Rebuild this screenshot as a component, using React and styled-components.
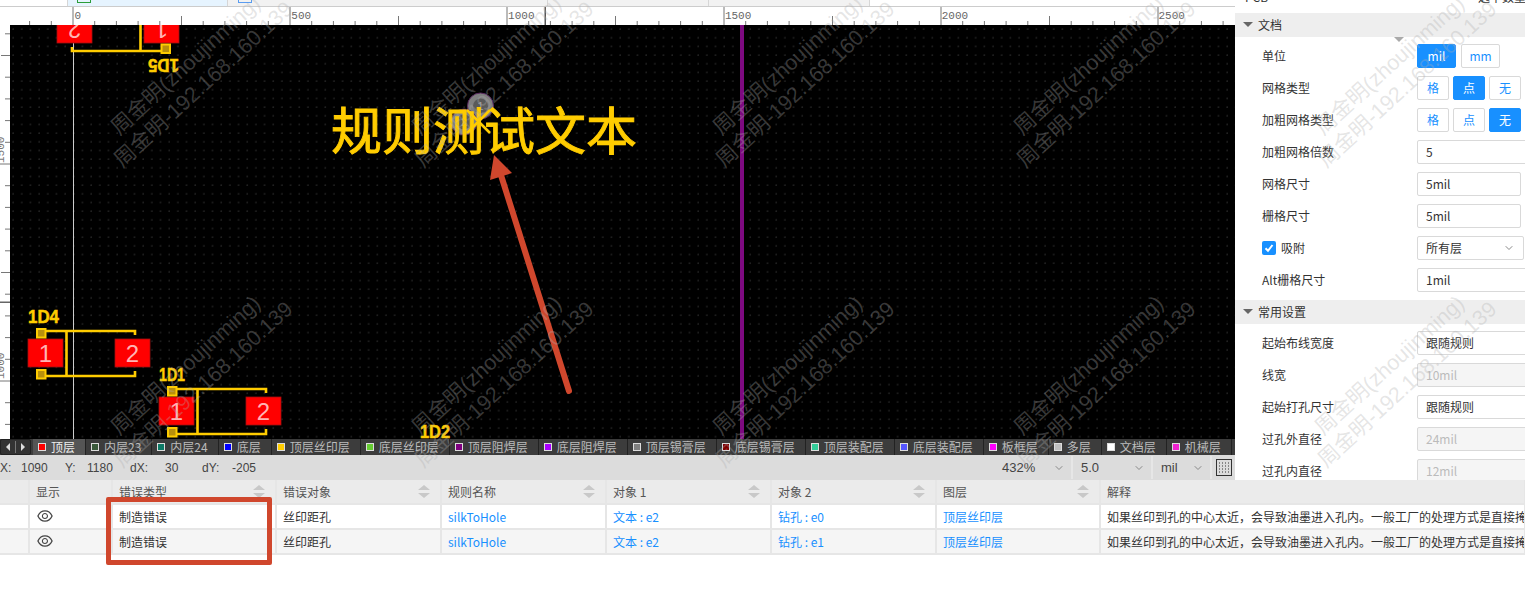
import React from "react"
import styled, { createGlobalStyle } from "styled-components"
import { ChevronDown } from "lucide-react"
import { AiOutlineEye } from "react-icons/ai"

const GlobalStyle = createGlobalStyle`
  html, body {
    margin: 0;
    padding: 0;
    overflow: hidden;
    background: #fff;
  }
  * {
    box-sizing: border-box;
  }
`

const BLUE = "#1890ff"
const SILK = "#ffcc00"
const MARK = "#d0472d"
const UI_FONT = `"Noto Sans CJK SC", "Liberation Sans", sans-serif`

const Page = styled.div`
  position: relative;
  width: 1525px;
  height: 590px;
  overflow: hidden;
  display: flex;
  flex-direction: column;
  font-family: ${UI_FONT};
  font-size: 12px;
  color: #333;
`

const Workspace = styled.div`
  display: flex;
  height: 480px;
  flex: none;
`

const Editor = styled.div`
  width: 1235px;
  flex: none;
  display: flex;
  flex-direction: column;
`

const TabStrip = styled.div`
  display: flex;
  height: 7px;
  flex: none;
  border-bottom: 1px solid #ccc;
  overflow: hidden;
`

const StripTab = styled.div`
  width: ${(p) => p.$w}px;
  flex: none;
  background: ${(p) => p.$bg};
  border-right: 1px solid #d6d6d6;
  display: flex;
  padding-left: ${(p) => p.$pad || 0}px;
`

const StripIcon = styled.div`
  width: 14px;
  height: 3px;
  border: 1px solid ${(p) => p.$c};
  border-top: 0;
`

const RulerRow = styled.div`
  display: flex;
  height: 18px;
  flex: none;
  background: #fff;
`

const RulerCorner = styled.div`
  width: 10px;
  flex: none;
`

const CanvasRow = styled.div`
  display: flex;
  height: 414px;
  flex: none;
`

const Canvas = styled.div`
  flex: 1;
  background-color: #000;
  background-image: radial-gradient(circle at 1px 1px, #3c3c3c 0.5px, transparent 0.8px);
  background-size: 8.68px 8.68px;
  background-position: 2px 3px;
`

const FullSvg = styled.svg`
  display: block;
  width: 100%;
  height: 100%;
`

const LayerBar = styled.div`
  display: flex;
  height: 16px;
  flex: none;
  background: #3c3c3c;
  overflow: hidden;
`

const LayerNav = styled.div`
  width: 31px;
  flex: none;
  display: flex;
  align-items: center;
  justify-content: space-around;
  border: 1px solid #222;
  border-radius: 2px;
  background: #333;
  margin-right: 2px;
  padding: 0 3px;
`

const NavArrow = styled.span`
  width: 0;
  height: 0;
  border-top: 4px solid transparent;
  border-bottom: 4px solid transparent;
  border-left: ${(p) => (p.$right ? "4px solid #ddd" : "0")};
  border-right: ${(p) => (p.$right ? "0" : "4px solid #ddd")};
`

const NavDivider = styled.span`
  width: 1px;
  height: 12px;
  background: #777;
`

const LayerTab = styled.div`
  display: flex;
  align-items: center;
  flex: none;
  padding: 0 10px 0 5px;
  gap: 5px;
  border-right: 1px solid #222;
  background: ${(p) => (p.$active ? "#555" : "transparent")};
  color: ${(p) => (p.$active ? "#eee" : "#bbb")};
  line-height: 16px;
`

const Swatch = styled.span`
  width: 8px;
  height: 8px;
  flex: none;
  background: ${(p) => p.$c};
  border: 1px solid #ddd;
`

const StatusBar = styled.div`
  display: flex;
  align-items: center;
  height: 25px;
  flex: none;
  background: #dcdcdc;
  font-family: "Liberation Sans", sans-serif;
  color: #444;
`

const StatusItem = styled.span`
  width: ${(p) => p.$w}px;
  flex: none;
  white-space: nowrap;
`

const StatusFill = styled.div`
  flex: 1;
`

const StatusSelect = styled.div`
  display: flex;
  align-items: center;
  justify-content: space-between;
  width: ${(p) => p.$w}px;
  height: 23px;
  flex: none;
  padding: 0 6px 0 8px;
  border-right: 2px solid #e6e6e6;
  font-size: 13px;
`

const GridButton = styled.div`
  width: 23px;
  display: flex;
  justify-content: center;
  flex: none;
`

const Panel = styled.aside`
  position: relative;
  flex: 1;
  background: #fff;
  overflow: hidden;
`

const PanelHead = styled.div`
  display: flex;
  justify-content: space-between;
  height: 24px;
  margin-top: -11px;
  padding: 0 0 0 10px;
  line-height: 16px;
  white-space: nowrap;
`

const HeadCount = styled.span`
  width: 47px;
`

const SectionTitle = styled.div`
  display: flex;
  align-items: center;
  gap: 5px;
  height: 24px;
  margin-top: ${(p) => p.$mt || 0}px;
  padding: 0 0 2px 8px;
  background: #eee;
`

const Caret = styled.span`
  width: 0;
  height: 0;
  border-left: 5px solid transparent;
  border-right: 5px solid transparent;
  border-top: 5px solid #666;
`

const CollapseHandle = styled(Caret)`
  position: absolute;
  top: 37px;
  left: 159px;
  border-top-color: #aaa;
`

const SectionBody = styled.div`
  display: flex;
  flex-direction: column;
  gap: 8px;
  padding-top: 7px;
`

const Field = styled.div`
  display: grid;
  grid-template-columns: 155px auto;
  align-items: center;
  height: 24px;
  padding-left: 27px;
  padding-bottom: 1px;
  white-space: nowrap;
`

const LabelWrap = styled.div`
  display: flex;
  align-items: center;
  gap: 5px;
`

const CheckBox = styled.span`
  display: flex;
  align-items: center;
  justify-content: center;
  width: 14px;
  height: 14px;
  background: ${BLUE};
  border-radius: 2px;
`

const ButtonGroup = styled.div`
  display: flex;
  gap: ${(p) => p.$gap}px;
  margin-bottom: -1px;
`

const ToggleButton = styled.div`
  width: ${(p) => p.$w}px;
  height: 24px;
  padding-bottom: 1px;
  display: flex;
  align-items: center;
  justify-content: center;
  border: 1px solid ${(p) => (p.$on ? BLUE : "#d9d9d9")};
  border-radius: 2px;
  background: ${(p) => (p.$on ? BLUE : "#fff")};
  color: ${(p) => (p.$on ? "#fff" : BLUE)};
`

const InputBox = styled.div`
  display: flex;
  align-items: center;
  justify-content: space-between;
  width: ${(p) => p.$w || 130}px;
  height: 24px;
  margin-bottom: -1px;
  padding: 0 8px 1px;
  border: 1px solid #d9d9d9;
  border-radius: 2px;
  background: ${(p) => (p.$off ? "#f5f5f5" : "#fff")};
  color: ${(p) => (p.$off ? "#bbb" : "#333")};
`

const Table = styled.div`
  display: flex;
  flex-direction: column;
  flex: none;
`

const TableRow = styled.div`
  display: grid;
  grid-template-columns: 30px 83px 164px 165px 165px 165px 165px 164px 425px;
  height: 25px;
  background: ${(p) => p.$bg};
  color: ${(p) => (p.$head ? "#555" : "#333")};
`

const Cell = styled.div`
  position: relative;
  display: flex;
  align-items: center;
  padding: 0 0 1px 6px;
  border-right: 2px solid #e6e6e6;
  border-bottom: 2px solid #e6e6e6;
  white-space: nowrap;
  overflow: hidden;
  color: ${(p) => (p.$link ? BLUE : "inherit")};
`

const SortMark = styled.span`
  position: absolute;
  right: 10px;
  top: 5px;
  display: flex;
  flex-direction: column;
  gap: 3px;
`

const SortUp = styled.span`
  width: 0;
  height: 0;
  border-left: 6px solid transparent;
  border-right: 6px solid transparent;
  border-bottom: 5px solid #c8c8c8;
`

const SortDown = styled(SortUp)`
  border-bottom: 0;
  border-top: 5px solid #c8c8c8;
`

const Callout = styled.div`
  position: absolute;
  left: 106px;
  top: 497px;
  width: 166px;
  height: 68px;
  border: 5px solid ${MARK};
  border-radius: 2px;
  pointer-events: none;
`

const Watermarks = styled.div`
  position: absolute;
  left: 44px;
  top: -75px;
  display: grid;
  grid-template-columns: repeat(5, 301px);
  grid-auto-rows: 300px;
  pointer-events: none;
`

const Watermark = styled.div`
  display: flex;
  flex-direction: column;
  align-items: center;
  justify-content: center;
  justify-self: center;
  align-self: center;
  transform: rotate(-42.5deg);
  font-family: "Liberation Sans", "Noto Sans CJK SC", sans-serif;
  font-size: 21.5px;
  line-height: 26px;
  white-space: nowrap;
  color: rgba(175, 175, 175, 0.32);
`

const COLUMNS = [
  ["显示"],
  ["错误类型", true],
  ["错误对象", true],
  ["规则名称", true],
  ["对象 1", true],
  ["对象 2", true],
  ["图层", true],
  ["解释"],
]

const EXPLAIN = "如果丝印到孔的中心太近，会导致油墨进入孔内。一般工厂的处理方式是直接掩盖"

const ERRORS = [
  { id: "钻孔 : e0", bg: "#fff" },
  { id: "钻孔 : e1", bg: "#f5f5f5" },
]

const LAYERS = [
  ["顶层", "#f00", true],
  ["内层23", "#3b5a3b"],
  ["内层24", "#0d7a66"],
  ["底层", "#00f"],
  ["顶层丝印层", SILK],
  ["底层丝印层", "#66cc33"],
  ["顶层阻焊层", "#800080"],
  ["底层阻焊层", "#aa00ff"],
  ["顶层锡膏层", "#808080"],
  ["底层锡膏层", "#800000"],
  ["顶层装配层", "#33cc99"],
  ["底层装配层", "#5555ff"],
  ["板框层", "#ff00ff"],
  ["多层", "#c0c0c0"],
  ["文档层", "#fff"],
  ["机械层", "#f022d0"],
]

const TICK = 21.7

const TopRuler = () => {
  const ticks = []
  for (let k = -2; k <= 53; k++) {
    const x = 73 + k * TICK
    const len = k % 10 === 0 ? 18 : k % 5 === 0 ? 9 : 4
    ticks.push(<line key={k} x1={x} x2={x} y1={25 - len} y2={25} stroke="#777" />)
  }
  return (
    <FullSvg viewBox="10 7 1225 18">
      {ticks}
      {[0, 500, 1000, 1500, 2000, 2500].map((v, i) => (
        <text key={v} x={74.5 + i * 216.8} y={19} fontFamily="Liberation Mono" fontSize="11" fill="#666">
          {v}
        </text>
      ))}
      <rect x="544.5" y="7" width="1.5" height="18" fill="#555" />
    </FullSvg>
  )
}

const SideRuler = () => {
  const ticks = []
  for (let k = -6; k <= 13; k++) {
    const y = 164 + k * TICK
    const len = k % 10 === 0 ? 10 : k % 5 === 0 ? 9 : 5
    ticks.push(<line key={k} x1={10 - len} x2={10} y1={y} y2={y} stroke="#777" />)
  }
  return (
    <FullSvg viewBox="0 25 10 414">
      {ticks}
      <text transform="translate(4 163) rotate(-90)" fontFamily="Liberation Mono" fontSize="11" fill="#777">
        1500
      </text>
      <text transform="translate(4 379) rotate(-90)" fontFamily="Liberation Mono" fontSize="11" fill="#777">
        1000
      </text>
      <rect x="0" y="301.5" width="10" height="1.5" fill="#666" />
    </FullSvg>
  )
}

const Designator = ({ x, y, w, children }) => (
  <text
    x={x}
    y={y}
    fontFamily="Liberation Sans"
    fontWeight="700"
    fontSize="18"
    fill={SILK}
    stroke={SILK}
    strokeWidth="0.5"
    textLength={w}
    lengthAdjust="spacingAndGlyphs"
  >
    {children}
  </text>
)

const Pad = ({ x, n }) => (
  <g>
    <rect x={x} y="339" width="35" height="28" fill="#f00" stroke="#a01010" strokeWidth="0.8" />
    <text x={x + 17.5} y="361.5" textAnchor="middle" fontFamily="Liberation Sans" fontSize="24" fill="#ffb4b4">
      {n}
    </text>
  </g>
)

const Drill = ({ y }) => <rect x="37" y={y} width="8.5" height="8.5" fill="#b8900c" stroke={SILK} strokeWidth="2" />

const Hole = ({ x, y, n }) => (
  <g>
    <circle cx={x} cy={y} r="13" fill="#808080" stroke="#5b2a60" />
    <circle cx={x} cy={y} r="7.5" fill="#5a5a5a" />
    <text x={x} y={y + 4} textAnchor="middle" fontFamily="Liberation Sans" fontSize="11" fill="#a0a0a0">
      {n}
    </text>
  </g>
)

// 1D4 is the base footprint, the others are moved copies of it
const Diode = ({ transform, name, w }) => (
  <g transform={transform}>
    <Designator x={28} y={323} w={w}>
      {name}
    </Designator>
    <Pad x={28} n="1" />
    <Pad x={115} n="2" />
    <path d="M41 331H135V335M41 376H135V371M66.5 331V376" fill="none" stroke={SILK} strokeWidth="2.6" />
    <Drill y={329} />
    <Drill y={370} />
  </g>
)

const Board = () => (
  <FullSvg viewBox="10 25 1225 414">
    <rect x="73" y="25" width="1" height="414" fill="#ccc" />
    <rect x="740" y="25" width="4" height="414" fill="#7d0a80" />
    <Diode transform="rotate(180 103.5 191)" name="1D5" w={31} />
    <Diode name="1D4" w={31} />
    <Diode transform="translate(131 58)" name="1D1" w={26} />
    <Designator x={420} y={438} w={30}>
      1D2
    </Designator>
    <Hole x={480.5} y={106} n="1" />
    <Hole x={464} y={122} n="2" />
    <text
      x="331"
      y="150"
      fontFamily="Noto Sans CJK SC"
      fontSize="51"
      fill={SILK}
      stroke={SILK}
      strokeWidth="0.9"
      textLength="306"
      lengthAdjust="spacingAndGlyphs"
    >
      规则测试文本
    </text>
    <path d="M467 133L490 110M467 110L490 133" stroke={SILK} strokeWidth="2.6" />
    <path d="M569 391L500 172" stroke={MARK} strokeWidth="6" strokeLinecap="round" />
    <path d="M494 155L490 180L512 173Z" fill={MARK} />
  </FullSvg>
)

const DotGrid = () => (
  <svg width="16" height="17" viewBox="0 0 16 17">
    <rect x="0.5" y="0.5" width="15" height="16" fill="none" stroke="#333" />
    {[4, 7, 10, 13].map((y) =>
      [3.5, 6.5, 9.5, 12.5].map((x) => <rect key={x + "-" + y} x={x - 0.5} y={y - 0.5} width="1" height="1" fill="#333" />)
    )}
  </svg>
)

const Toggles = ({ options, on, w, gap }) => (
  <ButtonGroup $gap={gap}>
    {options.map((o) => (
      <ToggleButton key={o} $w={w} $on={o === on}>
        {o}
      </ToggleButton>
    ))}
  </ButtonGroup>
)

const GRID_KINDS = ["格", "点", "无"]

const App = () => {
  return (
    <Page>
      <GlobalStyle />
      <Workspace>
        <Editor>
          <TabStrip>
            <StripTab $w={68} $bg="#fff" />
            <StripTab $w={160} $bg="#e6f4ff" $pad={9}>
              <StripIcon $c="#2a9d3a" />
            </StripTab>
            <StripTab $w={320} $bg="#f2f2f2" $pad={10}>
              <StripIcon $c="#5a9cf0" />
            </StripTab>
            <StripTab $w={161} $bg="#f2f2f2" />
            <StripTab $w={161} $bg="#f2f2f2" />
          </TabStrip>
          <RulerRow>
            <RulerCorner />
            <TopRuler />
          </RulerRow>
          <CanvasRow>
            <RulerCorner>
              <SideRuler />
            </RulerCorner>
            <Canvas>
              <Board />
            </Canvas>
          </CanvasRow>
          <LayerBar>
            <LayerNav>
              <NavArrow />
              <NavDivider />
              <NavArrow $right />
            </LayerNav>
            {LAYERS.map(([name, c, active]) => (
              <LayerTab key={name} $active={active}>
                <Swatch $c={c} />
                {name}
              </LayerTab>
            ))}
          </LayerBar>
          <StatusBar>
            <StatusItem $w={21}>X:</StatusItem>
            <StatusItem $w={44}>1090</StatusItem>
            <StatusItem $w={22}>Y:</StatusItem>
            <StatusItem $w={43}>1180</StatusItem>
            <StatusItem $w={35}>dX:</StatusItem>
            <StatusItem $w={37}>30</StatusItem>
            <StatusItem $w={30}>dY:</StatusItem>
            <StatusItem $w={40}>-205</StatusItem>
            <StatusFill />
            <StatusSelect $w={79}>
              432%
              <ChevronDown size={12} color="#888" />
            </StatusSelect>
            <StatusSelect $w={80}>
              5.0
              <ChevronDown size={12} color="#888" />
            </StatusSelect>
            <StatusSelect $w={59}>
              mil
              <ChevronDown size={12} color="#888" />
            </StatusSelect>
            <GridButton>
              <DotGrid />
            </GridButton>
          </StatusBar>
        </Editor>
        <Panel>
          <PanelHead>
            <span>PCB</span>
            <HeadCount>选中数量</HeadCount>
          </PanelHead>
          <CollapseHandle />
          <SectionTitle>
            <Caret />
            文档
          </SectionTitle>
          <SectionBody>
            <Field>
              单位
              <Toggles options={["mil", "mm"]} on="mil" w={39} gap={5} />
            </Field>
            <Field>
              网格类型
              <Toggles options={GRID_KINDS} on="点" w={32} gap={4} />
            </Field>
            <Field>
              加粗网格类型
              <Toggles options={GRID_KINDS} on="无" w={32} gap={4} />
            </Field>
            <Field>
              加粗网格倍数
              <InputBox>5</InputBox>
            </Field>
            <Field>
              网格尺寸
              <InputBox $w={104}>5mil</InputBox>
            </Field>
            <Field>
              栅格尺寸
              <InputBox $w={104}>5mil</InputBox>
            </Field>
            <Field>
              <LabelWrap>
                <CheckBox>
                  <svg width="10" height="10" viewBox="0 0 10 10">
                    <path d="M1.5 5.2L4 7.8L8.5 2" fill="none" stroke="#fff" strokeWidth="2" />
                  </svg>
                </CheckBox>
                吸附
              </LabelWrap>
              <InputBox $w={107}>
                所有层
                <ChevronDown size={12} color="#888" />
              </InputBox>
            </Field>
            <Field>
              Alt栅格尺寸
              <InputBox>1mil</InputBox>
            </Field>
          </SectionBody>
          <SectionTitle $mt={8}>
            <Caret />
            常用设置
          </SectionTitle>
          <SectionBody>
            <Field>
              起始布线宽度
              <InputBox>跟随规则</InputBox>
            </Field>
            <Field>
              线宽
              <InputBox $off>10mil</InputBox>
            </Field>
            <Field>
              起始打孔尺寸
              <InputBox>跟随规则</InputBox>
            </Field>
            <Field>
              过孔外直径
              <InputBox $off>24mil</InputBox>
            </Field>
            <Field>
              过孔内直径
              <InputBox $off>12mil</InputBox>
            </Field>
          </SectionBody>
        </Panel>
      </Workspace>
      <Table>
        <TableRow $head $bg="#ebebeb">
          <Cell />
          {COLUMNS.map(([title, sortable]) => (
            <Cell key={title}>
              {title}
              {sortable && (
                <SortMark>
                  <SortUp />
                  <SortDown />
                </SortMark>
              )}
            </Cell>
          ))}
        </TableRow>
        {ERRORS.map((row) => (
          <TableRow key={row.id} $bg={row.bg}>
            <Cell />
            <Cell>
              <AiOutlineEye size={18} color="#444" />
            </Cell>
            <Cell>制造错误</Cell>
            <Cell>丝印距孔</Cell>
            <Cell $link>silkToHole</Cell>
            <Cell $link>文本 : e2</Cell>
            <Cell $link>{row.id}</Cell>
            <Cell $link>顶层丝印层</Cell>
            <Cell>{EXPLAIN}</Cell>
          </TableRow>
        ))}
      </Table>
      <Callout />
      <Watermarks>
        {Array.from({ length: 10 }, (_, i) => (
          <Watermark key={i}>
            <span>周金明(zhoujinming)</span>
            <span>周金明-192.168.160.139</span>
          </Watermark>
        ))}
      </Watermarks>
    </Page>
  )
}

export default App
